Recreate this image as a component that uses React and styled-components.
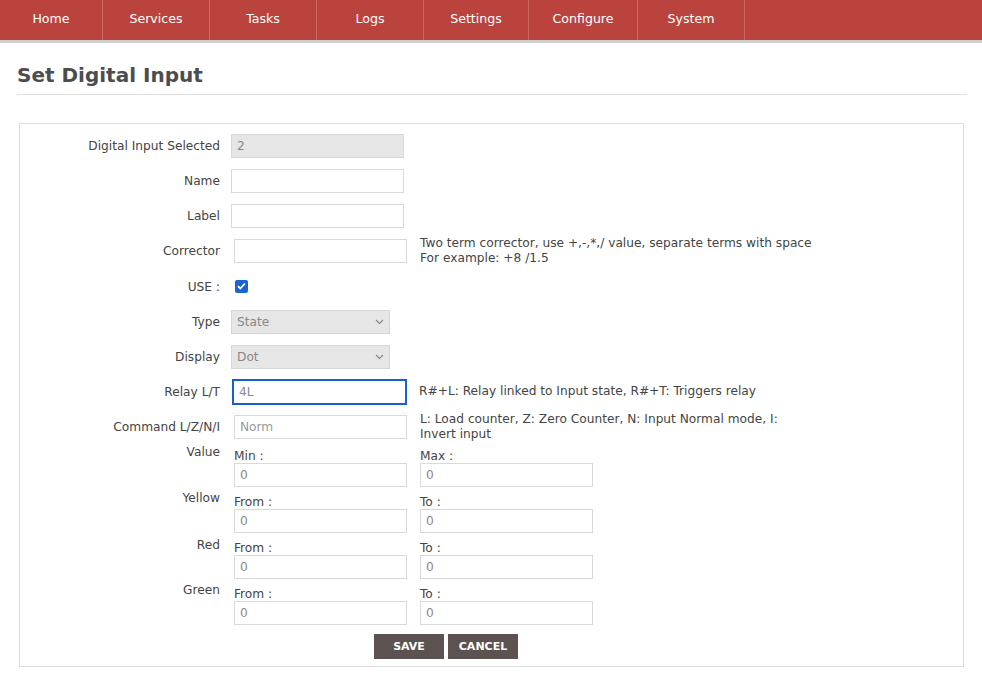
import React from "react"
import styled, { createGlobalStyle } from "styled-components"

const GlobalStyle = createGlobalStyle`
  body {
    margin: 0;
    background: #fff;
    font-family: "DejaVu Sans", Tahoma, sans-serif;
    color: #444;
  }
`

const Nav = styled.nav`
  display: flex;
  height: 40px;
  background: #ba443d;
  border-bottom: 3px solid #cfcfcf;
`

const NavItem = styled.a`
  width: ${(p) => p.$w}px;
  display: flex;
  align-items: center;
  justify-content: center;
  padding-bottom: 3px;
  box-sizing: border-box;
  color: #fff;
  font-size: 12.6px;
  text-decoration: none;
  border-right: 1px solid #cc6a62;
`

const Main = styled.main`
  padding: 0 15px 0 17px;
`

const Title = styled.h1`
  margin: 20px 0 0;
  padding-bottom: 7px;
  font-size: 20px;
  line-height: 24px;
  font-weight: bold;
  color: #4d4d4d;
  border-bottom: 1px solid #ddd;
`

const FormBox = styled.form`
  margin: 28px 3px 0 2px;
  padding: 4px 0 7px;
  border: 1px solid #ddd;
`

const Row = styled.div`
  display: grid;
  grid-template-columns: 200px 1fr;
  column-gap: 11px;
  align-items: ${(p) => (p.$top ? "start" : "center")};
  height: ${(p) => p.$h}px;
`

const Label = styled.label`
  text-align: right;
  font-size: 12.2px;
  line-height: 14px;
  color: #444;
  padding-top: ${(p) => p.$pt || 0}px;
`

const Input = styled.input`
  box-sizing: border-box;
  width: 173px;
  height: 24px;
  margin: 0;
  padding: 0 5px;
  border: 1px solid #d9d9d9;
  border-radius: 0;
  background: ${(p) => (p.disabled ? "#e6e6e6" : "#fff")};
  font-family: inherit;
  font-size: 12.2px;
  color: #888;
  outline: ${(p) => (p.$focused ? "2px solid #1a5fcf" : "none")};
  outline-offset: -1px;
  &::placeholder {
    color: #999;
  }
`

const WithHint = styled.div`
  display: grid;
  grid-template-columns: 173px 395px;
  column-gap: 13px;
  align-items: center;
  padding-left: ${(p) => p.$inset || 0}px;
`

const Hint = styled.div`
  font-size: 12.2px;
  line-height: 15px;
  color: #444;
`

const SelectBox = styled.div`
  box-sizing: border-box;
  width: 159px;
  height: 24px;
  display: flex;
  align-items: center;
  justify-content: space-between;
  padding: 0 5px;
  border: 1px solid #d6d6d6;
  background: #e6e6e6;
  font-size: 12.2px;
  color: #888;
`

const Check = styled.span`
  display: flex;
  align-items: center;
  justify-content: center;
  width: 13px;
  height: 13px;
  margin: -1px 0 0 4px;
  border-radius: 2px;
  background: #1b63d3;
`

const RangeFields = styled.div`
  display: grid;
  grid-template-columns: 173px 173px;
  column-gap: 13px;
  padding-left: 3px;
`

const SubLabel = styled.div`
  margin-top: 4px;
  font-size: 12.2px;
  line-height: 14px;
  color: #444;
`

const Buttons = styled.div`
  display: flex;
  gap: 4px;
  margin-top: 5px;
  padding-left: 354px;
`

const Button = styled.button`
  width: 70px;
  height: 25px;
  border: none;
  background: #5c5250;
  color: #fff;
  font-family: inherit;
  font-size: 11px;
  font-weight: bold;
`

const navItems = [
  ["Home", 103],
  ["Services", 107],
  ["Tasks", 107],
  ["Logs", 107],
  ["Settings", 105],
  ["Configure", 109],
  ["System", 107],
]

const ranges = [
  ["Value", "Min :", "Max :", 0],
  ["Yellow", "From :", "To :", 0],
  ["Red", "From :", "To :", 1],
  ["Green", "From :", "To :", 0],
]

function Chevron() {
  return (
    <svg width="9" height="6" viewBox="0 0 9 6">
      <path d="M1 1l3.5 3.5L8 1" fill="none" stroke="#888" strokeWidth="1.2" />
    </svg>
  )
}

function Select({ value }) {
  return (
    <SelectBox>
      {value}
      <Chevron />
    </SelectBox>
  )
}

export default function App() {
  return (
    <>
      <GlobalStyle />
      <Nav>
        {navItems.map(([name, w]) => (
          <NavItem key={name} $w={w} href="#">
            {name}
          </NavItem>
        ))}
      </Nav>
      <Main>
        <Title>Set Digital Input</Title>
        <FormBox onSubmit={(e) => e.preventDefault()}>
          <Row $h={35}>
            <Label>Digital Input Selected</Label>
            <Input disabled defaultValue="2" />
          </Row>
          <Row $h={35}>
            <Label>Name</Label>
            <Input />
          </Row>
          <Row $h={35}>
            <Label>Label</Label>
            <Input />
          </Row>
          <Row $h={36}>
            <Label>Corrector</Label>
            <WithHint $inset={3}>
              <Input />
              <Hint>
                Two term corrector, use +,-,*,/ value, separate terms with space
                <br />
                For example: +8 /1.5
              </Hint>
            </WithHint>
          </Row>
          <Row $h={35}>
            <Label>USE :</Label>
            <Check>
              <svg width="9" height="8" viewBox="0 0 9 8">
                <path d="M1 4.2l2.3 2.3L8 1.5" fill="none" stroke="#fff" strokeWidth="1.8" />
              </svg>
            </Check>
          </Row>
          <Row $h={35}>
            <Label>Type</Label>
            <Select value="State" />
          </Row>
          <Row $h={35}>
            <Label>Display</Label>
            <Select value="Dot" />
          </Row>
          <Row $h={35}>
            <Label>Relay L/T</Label>
            <WithHint $inset={2}>
              <Input $focused defaultValue="4L" />
              <Hint>R#+L: Relay linked to Input state, R#+T: Triggers relay</Hint>
            </WithHint>
          </Row>
          <Row $h={36}>
            <Label>Command L/Z/N/I</Label>
            <WithHint $inset={3}>
              <Input placeholder="Norm" />
              <Hint>L: Load counter, Z: Zero Counter, N: Input Normal mode, I: Invert input</Hint>
            </WithHint>
          </Row>
          {ranges.map(([name, a, b, pt]) => (
            <Row key={name} $h={46} $top>
              <Label $pt={pt}>{name}</Label>
              <RangeFields>
                <div>
                  <SubLabel>{a}</SubLabel>
                  <Input defaultValue="0" />
                </div>
                <div>
                  <SubLabel>{b}</SubLabel>
                  <Input defaultValue="0" />
                </div>
              </RangeFields>
            </Row>
          ))}
          <Buttons>
            <Button type="submit">SAVE</Button>
            <Button type="button">CANCEL</Button>
          </Buttons>
        </FormBox>
      </Main>
    </>
  )
}
